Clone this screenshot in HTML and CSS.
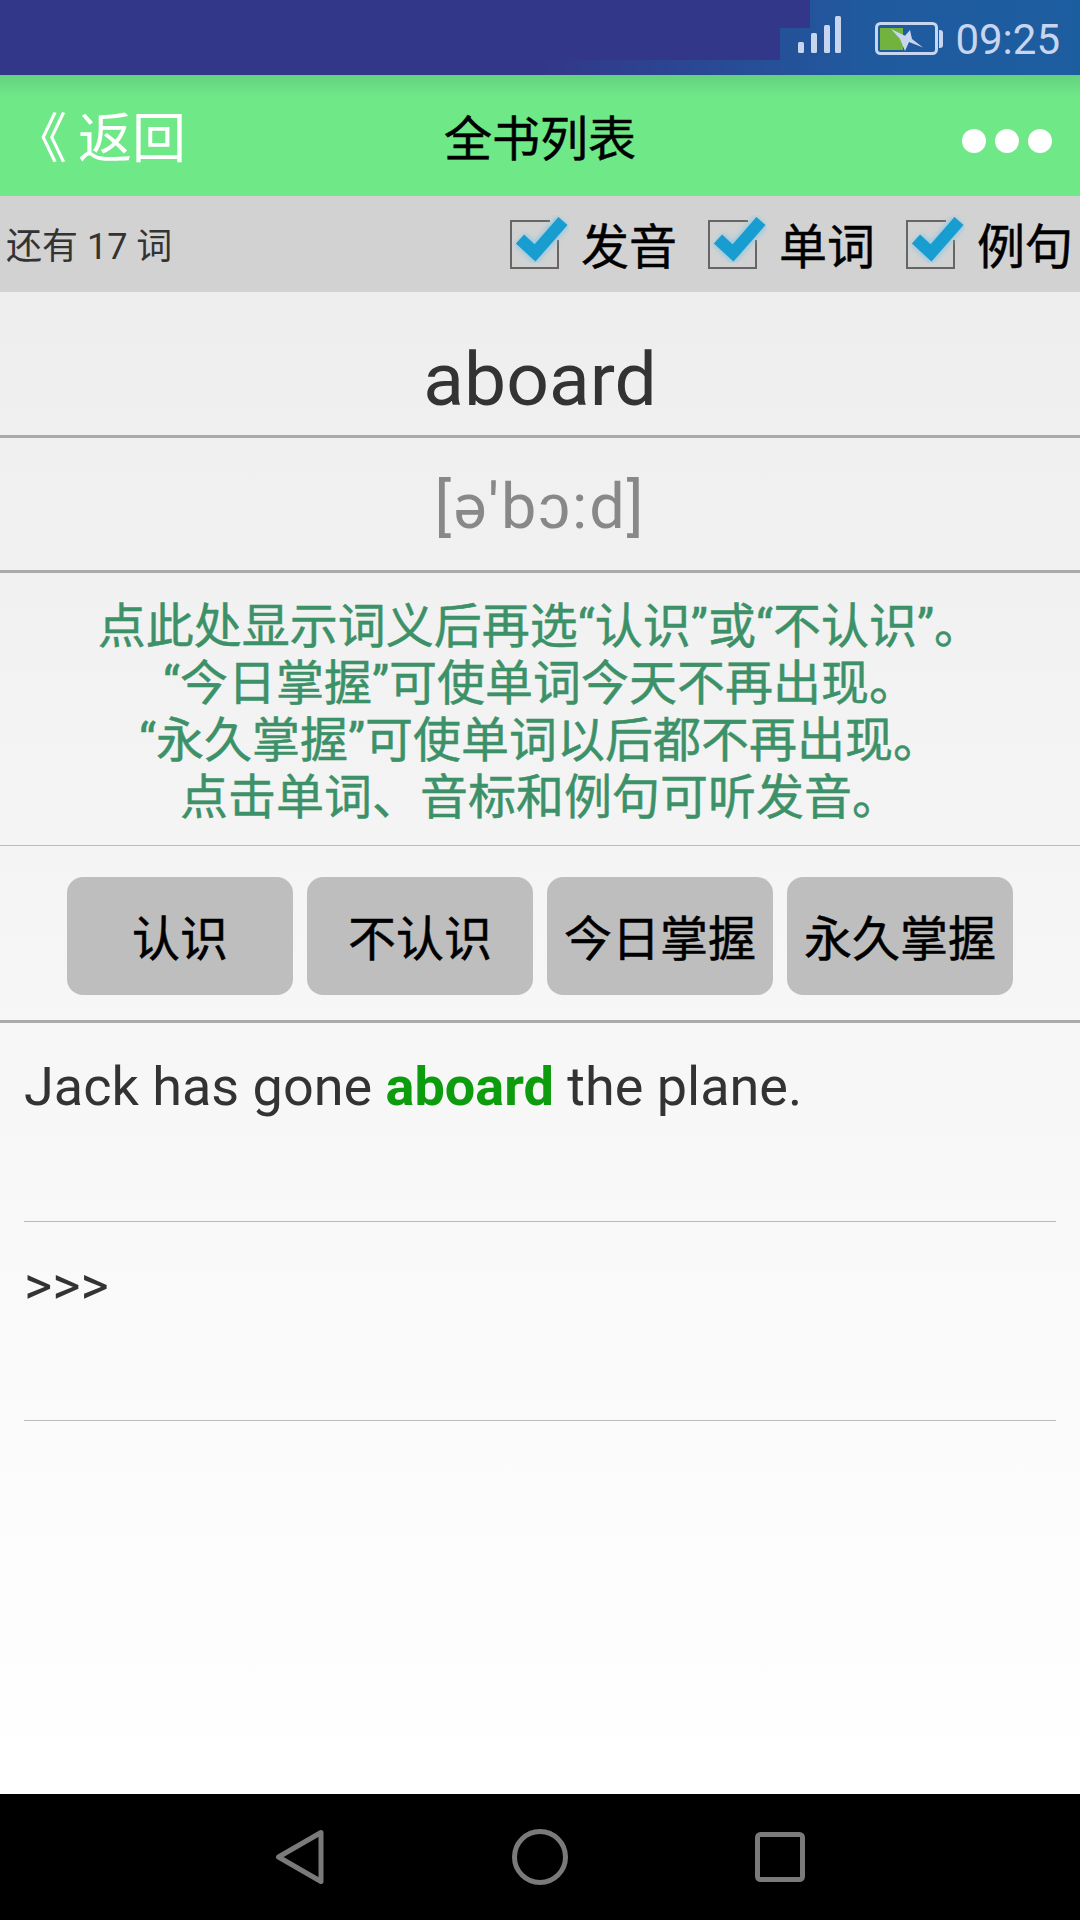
FILE: index.html
```html
<!DOCTYPE html>
<html lang="zh-CN">
<head>
<meta charset="utf-8">
<title>全书列表</title>
<link rel="stylesheet" href="styles.css">
</head>
<body>
<svg class="defs" width="0" height="0"><defs><filter id="glow" x="-30%" y="-30%" width="160%" height="160%"><feGaussianBlur stdDeviation="2.5"/></filter></defs></svg>
<div class="screen">
  <div class="status">
    <div class="patch patch-a"></div>
    <div class="patch patch-b"></div>
    <svg class="signal" width="44" height="38" viewBox="0 0 44 38"><g fill="#c8d5ee"><rect x="0" y="26" width="6" height="11" rx="1.5"/><rect x="13" y="17" width="6" height="20" rx="1.5"/><rect x="26" y="9" width="6" height="28" rx="1.5"/><rect x="37" y="0" width="6" height="37" rx="1.5"/></g></svg>
    <svg class="battery" width="68" height="34" viewBox="0 0 68 34"><rect x="5" y="6" width="23" height="22" fill="#72b340"/><rect x="1.5" y="1.5" width="60" height="30" rx="4" fill="none" stroke="#c8d5ee" stroke-width="3"/><path d="M64 8h1q3 0 3 3v12q0 3-3 3h-1z" fill="#c8d5ee"/><path d="M16 7L30 13.700 35 8l2 9 11 8.500-14-5.500L30 29l-5-12z" fill="#c8d5ee"/></svg>
    <span class="time">09:25</span>
  </div>
  <header class="appbar">
    <span class="back"><span class="chev">《</span>返回</span>
    <span class="title">全书列表</span>
    <span class="dots"><i></i><i></i><i></i></span>
  </header>
  <div class="toolbar">
    <span class="remain">还有 17 词</span>
    <div class="opts">
      <label class="opt"><svg class="check" width="60" height="56" viewBox="0 0 60 56"><path class="box" d="M41 6H2V53H49V25"/><path class="tick-glow" d="M11 24l15 14L54 6"/><path class="tick" d="M11 24l15 14L54 6"/></svg>发音</label>
      <label class="opt"><svg class="check" width="60" height="56" viewBox="0 0 60 56"><path class="box" d="M41 6H2V53H49V25"/><path class="tick-glow" d="M11 24l15 14L54 6"/><path class="tick" d="M11 24l15 14L54 6"/></svg>单词</label>
      <label class="opt"><svg class="check" width="60" height="56" viewBox="0 0 60 56"><path class="box" d="M41 6H2V53H49V25"/><path class="tick-glow" d="M11 24l15 14L54 6"/><path class="tick" d="M11 24l15 14L54 6"/></svg>例句</label>
    </div>
  </div>
  <main class="content">
    <div class="word">aboard</div>
    <div class="phonetic">[ə'bɔ:d]</div>
    <div class="notice">
      <p>点此处显示词义后再选“认识”或“不认识”。</p>
      <p>“今日掌握”可使单词今天不再出现。</p>
      <p>“永久掌握”可使单词以后都不再出现。</p>
      <p>点击单词、音标和例句可听发音。</p>
    </div>
    <div class="actions">
      <button class="btn">认识</button>
      <button class="btn">不认识</button>
      <button class="btn">今日掌握</button>
      <button class="btn">永久掌握</button>
    </div>
    <div class="examples">
      <div class="example">Jack has gone <b>aboard</b> the plane.</div>
      <div class="example">&gt;&gt;&gt;</div>
    </div>
  </main>
  <nav class="navbar">
    <svg width="50" height="56" viewBox="0 0 50 56"><path d="M3.500 28L46 3.500v49z" fill="none" stroke="#7a7a7a" stroke-width="5" stroke-linejoin="round"/></svg>
    <svg width="56" height="56" viewBox="0 0 56 56"><circle cx="28" cy="28" r="25.500" fill="none" stroke="#7a7a7a" stroke-width="5"/></svg>
    <svg width="50" height="50" viewBox="0 0 50 50"><rect x="2.500" y="2.500" width="45" height="45" rx="3" fill="none" stroke="#7a7a7a" stroke-width="5"/></svg>
  </nav>
</div>
</body>
</html>
```
FILE: styles.css
```css
* { box-sizing: border-box; }
html, body { margin: 0; padding: 0; }
body { width: 1080px; height: 1920px; overflow: hidden; font-family: Roboto, "Noto Sans CJK SC", sans-serif; }
.defs { display: block; height: 0; }
.screen { width: 1080px; height: 1920px; display: flex; flex-direction: column; }

.status { position: relative; height: 75px; flex: none; display: flex; align-items: flex-start; justify-content: flex-end; padding-right: 20px; background: linear-gradient(90deg, #33378a 0%, #33378a 50%, #205a9e 80%, #1c5da0 100%); }
.patch { position: absolute; left: 0; background: #33378a; }
.patch-a { top: 0; width: 810px; height: 28px; }
.patch-b { top: 28px; width: 780px; height: 32px; }
.signal { position: relative; margin-right: 33px; margin-top: 16px; }
.battery { position: relative; margin-right: 12px; margin-top: 22px; }
.time { position: relative; font-size: 42px; color: #c8d5ee; line-height: 1; margin-top: 19px; }

.appbar { position: relative; height: 121px; flex: none; display: flex; align-items: center; justify-content: space-between; padding: 0 28px 2px 13px; background: linear-gradient(180deg, #63d27e 0, #6fe888 22px, #6fe888 100%); }
.back { color: #fff; font-size: 54px; display: flex; align-items: center; }
.chev { display: inline-block; width: 54px; margin-right: 11px; }
.title { position: absolute; left: 0; right: 0; text-align: center; font-size: 48px; color: #000; -webkit-text-stroke: .5px #000; }
.dots { display: flex; gap: 9px; margin-top: 12px; }
.dots i { display: block; width: 24px; height: 24px; border-radius: 50%; background: #fff; }

.toolbar { height: 96px; flex: none; display: flex; align-items: center; justify-content: space-between; padding: 0 7px 2px 6px; background: #d2d2d2; }
.remain { font-size: 36px; color: #333; }
.opts { display: flex; gap: 30px; }
.opt { display: flex; align-items: center; gap: 12px; font-size: 48px; color: #000; -webkit-text-stroke: .5px #000; }
.box { fill: none; stroke: #666; stroke-width: 2; }
.tick-glow { fill: none; stroke: #7fc4e4; stroke-width: 16; stroke-opacity: .7; filter: url(#glow); }
.tick { fill: none; stroke: #189dd0; stroke-width: 12; }

.content { flex: 1; display: flex; flex-direction: column; background: linear-gradient(180deg, #eeeeee 0%, #ffffff 100%); }
.word { height: 146px; padding-top: 30px; display: flex; align-items: center; justify-content: center; font-size: 75px; color: #333; border-bottom: 3px solid #aaa; }
.phonetic { height: 135px; padding-top: 4px; display: flex; align-items: center; justify-content: center; font-size: 63px; letter-spacing: 2px; color: #888; border-bottom: 3px solid #aaa; }
.notice { height: 273px; padding-top: 25px; border-bottom: 1px solid #bbb; text-align: center; font-size: 48px; line-height: 57px; color: #3c9168; -webkit-text-stroke: .5px #3c9168; text-spacing-trim: space-all; }
.notice p { margin: 0; }
.actions { height: 177px; display: flex; justify-content: center; gap: 14px; padding-top: 31px; border-bottom: 3px solid #aaa; }
.btn { width: 226px; height: 118px; border: 0; border-radius: 16px; background: #bebebe; font: inherit; font-size: 48px; color: #000; -webkit-text-stroke: .5px #000; padding: 0 0 3px; }
.examples { padding: 0 24px; }
.example { height: 199px; padding-top: 32px; font-size: 54px; line-height: 64px; color: #333; border-bottom: 1px solid #bbb; }
.example b { color: #0d9c0d; font-weight: 700; }

.navbar { height: 126px; flex: none; background: #000; display: flex; align-items: center; justify-content: center; gap: 187px; }
```
